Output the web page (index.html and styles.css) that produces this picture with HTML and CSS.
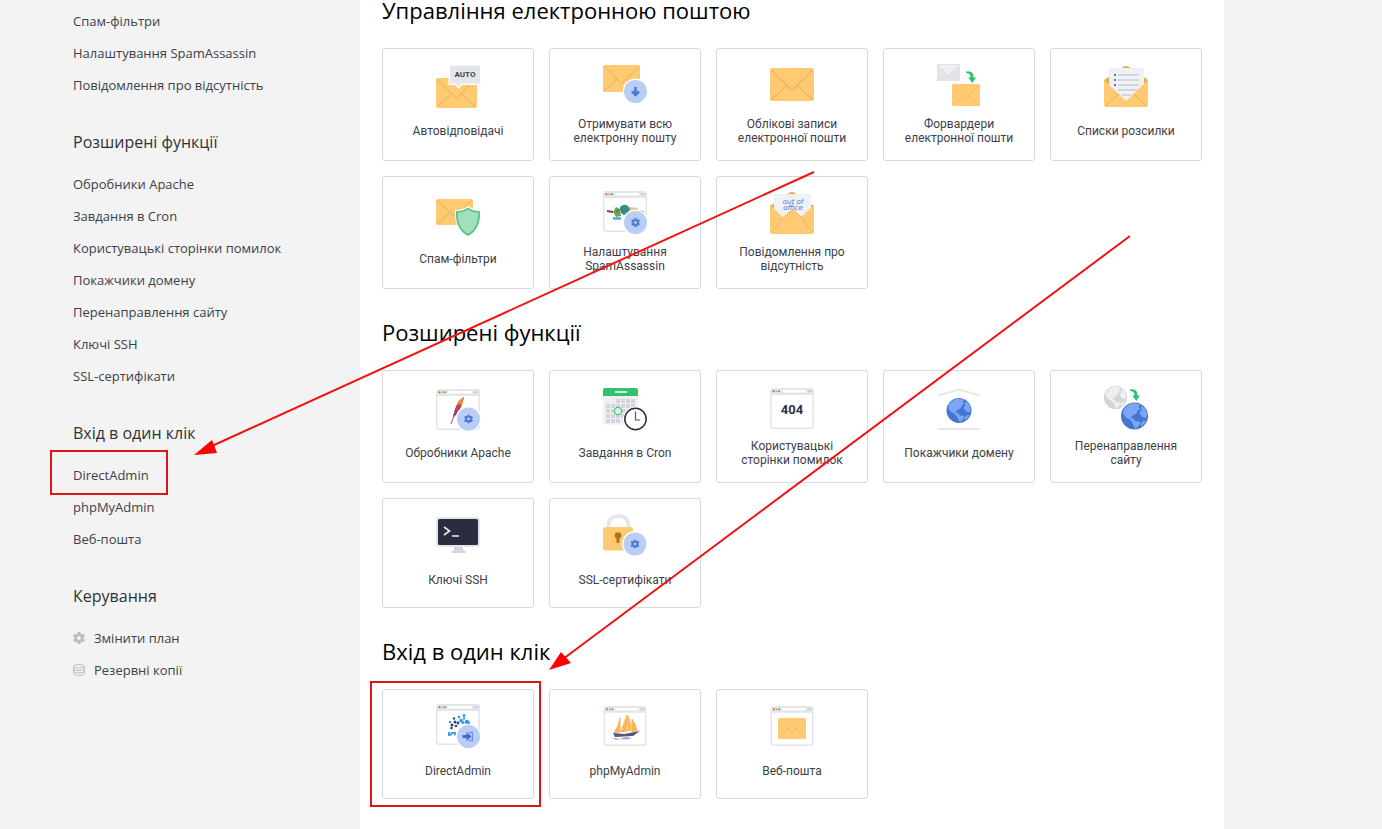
FILE: index.html
```
<!DOCTYPE html>
<html lang="uk">
<head>
    <meta charset="UTF-8">
    <meta name="viewport" content="width=device-width, initial-scale=1.0">
    <title>Панель керування хостингом</title>
    <link rel="stylesheet" href="styles.css">
</head>
<body>
    <!-- Shared icon parts -->
    <svg class="sprite" aria-hidden="true">
        <symbol id="envelope" viewBox="0 0 44 33" preserveAspectRatio="none">
            <rect width="44" height="33" rx="2.5" fill="#ffca72"/>
            <path d="M1 32 17 17M43 32 27 17M1 1.5 20 20.5q2 1.8 4 0L43 1.5" fill="none" stroke="#e9b765" stroke-width="1.2"/>
        </symbol>
        <symbol id="envelope-gray" viewBox="0 0 44 33" preserveAspectRatio="none">
            <rect width="44" height="33" rx="2" fill="#e2e4e8"/>
            <path d="M1 32 17 17M43 32 27 17" stroke="#d3d6db" stroke-width="1.2"/>
            <path d="M1 1 20 20.5q2 1.8 4 0L43 1z" fill="#eff0f3" stroke="#d6d8dd"/>
        </symbol>
        <symbol id="window" viewBox="0 0 44 41">
            <rect width="44" height="41" rx="3" fill="#e4e5e9"/>
            <path d="M1.5 7h41v30.500q0 2-2 2h-37q-2 0-2-2z" fill="#fff"/>
            <rect x="12" y="2" width="24" height="2.500" rx="1" fill="#fff"/>
            <circle cx="3.500" cy="3.300" r="1" fill="#d9534f"/>
            <circle cx="6.300" cy="3.300" r="1" fill="#e8a13a"/>
            <circle cx="9" cy="3.300" r="1" fill="#35b566"/>
            <path d="M38 3.300h1.500M40.500 3.300H42" stroke="#bfc2c9" stroke-width="1.500"/>
        </symbol>
        <symbol id="gear" viewBox="0 0 12 12">
            <circle cx="6" cy="6" r="3.200" fill="none" stroke="currentColor" stroke-width="2.600"/>
            <path d="M6 0v2M6 10v2M.8 3l1.700 1M9.500 8l1.700 1M.8 9l1.700-1M9.500 4l1.700-1" stroke="currentColor" stroke-width="3"/>
        </symbol>
        <symbol id="badge" viewBox="0 0 26 26">
            <circle cx="13" cy="13" r="13" fill="#fff"/>
            <circle cx="13" cy="13" r="11.500" fill="#bacdf4"/>
        </symbol>
        <symbol id="turn" viewBox="0 0 10 12">
            <path d="M0 0.500q7.500-1.500 7.500 6h2.500l-3.700 5.500L2.200 6.500h2.300q.3-4.500-4.500-4.500z" fill="#2fbe6f"/>
        </symbol>
        <symbol id="land" viewBox="0 0 28 28">
            <path d="M3 7q4-6 11-6.500l3 1 3 0-2 3 2 2-3 2-1 3-4 2-2 3 3 0 2 3 4 0 1 2-2 3-3 3-2-4-3-5-5-3-3-4z"/>
            <path d="M21 3q5 3 6 9l-1 4-4-1-3-4 2-3zM23 19l3 0q-2 4-5 6l-1-3z"/>
        </symbol>
    </svg>

    <div class="page">
        <nav class="sidebar">
            <ul>
                <li><a href="#">Спам-фільтри</a></li>
                <li><a href="#">Налаштування SpamAssassin</a></li>
                <li><a href="#">Повідомлення про відсутність</a></li>
            </ul>

            <h3>Розширені функції</h3>
            <ul>
                <li><a href="#">Обробники Apache</a></li>
                <li><a href="#">Завдання в Cron</a></li>
                <li><a href="#">Користувацькі сторінки помилок</a></li>
                <li><a href="#">Покажчики домену</a></li>
                <li><a href="#">Перенаправлення сайту</a></li>
                <li><a href="#">Ключі SSH</a></li>
                <li><a href="#">SSL-сертифікати</a></li>
            </ul>

            <h3>Вхід в один клік</h3>
            <ul>
                <li><a href="#">DirectAdmin</a></li>
                <li><a href="#">phpMyAdmin</a></li>
                <li><a href="#">Веб-пошта</a></li>
            </ul>

            <h3>Керування</h3>
            <ul>
                <li><a href="#"><svg class="nav-icon" viewBox="0 0 12 12" aria-hidden="true"><use href="#gear"/></svg>Змінити план</a></li>
                <li><a href="#"><svg class="nav-icon" viewBox="0 0 12 12" aria-hidden="true">
                    <path d="M.7 2.500v7.300q1 1.700 5.300 1.700t5.300-1.700V2.500M.7 5q1 1.500 5.300 1.500T11.300 5M.7 7.500Q1.700 9 6 9t5.300-1.500" fill="none" stroke="currentColor"/>
                    <ellipse cx="6" cy="2.300" rx="5.300" ry="1.700" fill="none" stroke="currentColor"/>
                </svg>Резервні копії</a></li>
            </ul>
        </nav>

        <main class="content">
            <section>
                <h2>Управління електронною поштою</h2>
                <div class="cards">
                    <a class="card" href="#">
                        <svg class="icon" viewBox="0 0 44 44" aria-hidden="true">
                            <use href="#envelope" y="14" width="41" height="30"/>
                            <path d="M12.500 0H44v21H26l-3.500 4-3.500-4h-6.500z" fill="#fff"/>
                            <path d="M14 1.500h30v18H25.500L22.500 23l-3-3.500H14z" fill="#e5e6ec"/>
                            <text class="auto" x="29" y="12.500">AUTO</text>
                        </svg>
                        <span>Автовідповідачі</span>
                    </a>
                    <a class="card" href="#">
                        <svg class="icon" viewBox="0 0 44 44" aria-hidden="true">
                            <use href="#envelope" y="1" width="37" height="27"/>
                            <use href="#badge" x="19.500" y="14.500" width="26" height="26"/>
                            <path d="M32.500 23v7M29 27.500l3.500 3.500 3.500-3.500" fill="none" stroke="#4678d4" stroke-width="2.600"/>
                        </svg>
                        <span>Отримувати всю електронну пошту</span>
                    </a>
                    <a class="card" href="#">
                        <svg class="icon" viewBox="0 0 44 44" aria-hidden="true">
                            <use href="#envelope" y="4" width="44" height="33"/>
                        </svg>
                        <span>Облікові записи електронної пошти</span>
                    </a>
                    <a class="card" href="#">
                        <svg class="icon" viewBox="0 0 44 44" aria-hidden="true">
                            <use href="#envelope-gray" width="23" height="17"/>
                            <use href="#envelope" x="15" y="20" width="28" height="22"/>
                            <use href="#turn" x="29" y="7" width="10" height="12"/>
                        </svg>
                        <span>Форвардери електронної пошти</span>
                    </a>
                    <a class="card" href="#">
                        <svg class="icon" viewBox="0 0 44 44" aria-hidden="true">
                            <path d="M0 16 19 3q3-2 6 0l19 13v8H0z" fill="#e5ac50"/>
                            <path d="M5 4h35v18L22 38 5 22z" fill="#eff1f5"/>
                            <path d="M14 11h21M14 16h21M14 21h21M14 26h19M18 31h9" stroke="#c9cdd7" stroke-width="1.300"/>
                            <path d="M10 11h2M10 16h2M10 21h2" stroke="#4678d4" stroke-width="2"/>
                            <path d="M0 16l20 19q2 2 4 0l20-19v24.500q0 2.500-2.500 2.500h-39Q0 43 0 40.500z" fill="#ffca72"/>
                            <path d="M1 42 15 30M43 42 29 30" stroke="#e3af5d"/>
                        </svg>
                        <span>Списки розсилки</span>
                    </a>

                    <a class="card" href="#">
                        <svg class="icon" viewBox="0 0 44 44" aria-hidden="true">
                            <use href="#envelope" y="7" width="37" height="26"/>
                            <path d="M32 14q6 4 13 4 1 19-13 27-14-8-13-27 7 0 13-4z" fill="#fff"/>
                            <path d="M32 16.500q5 3.500 11 3.500 1 16-11 23-12-7-11-23 6 0 11-3.500z" fill="#a3dfba" stroke="#5ec78f" stroke-width="2"/>
                        </svg>
                        <span>Спам-фільтри</span>
                    </a>
                    <a class="card" href="#">
                        <svg class="icon" viewBox="0 0 44 44" aria-hidden="true">
                            <use href="#window" y="-1" width="44" height="41"/>
                            <path d="M4 18l6 1v2l-6-1z" fill="#8a3565"/>
                            <path d="M26 15l9 1v3l-9 1z" fill="#f0c28a"/>
                            <path d="M36 18.500l5 1.500" stroke="#766da8"/>
                            <path d="M10 20l3-5 4 2 1 7-5 1z" fill="#6aa457"/>
                            <path d="M17 15q4-4 8-1l2 3-3 7-6-3z" fill="#378f83"/>
                            <path d="M13 20l5-3 3 6" fill="none" stroke="#39745a"/>
                            <path d="M10 26.500h8" stroke="#56a7d5" stroke-width="2.500"/>
                            <use href="#badge" x="19.500" y="17.500" width="26" height="26"/>
                            <svg x="28" y="26" width="9" height="9" color="#4678d4"><use href="#gear"/></svg>
                        </svg>
                        <span>Налаштування SpamAssassin</span>
                    </a>
                    <a class="card" href="#">
                        <svg class="icon" viewBox="0 0 44 44" aria-hidden="true">
                            <path d="M0 14 19 1q3-2 6 0l19 13v8H0z" fill="#e5ac50"/>
                            <path d="M4 2h37v20L30 30H14L4 22z" fill="#eff1f5"/>
                            <path d="M0 13l13 12 7.500-6q2-1.500 4 0L31 25l13-12v26.500q0 2.500-2.500 2.500h-39Q0 42 0 39.500z" fill="#ffca72"/>
                            <path d="M1 41 13 26l8-7q2-1.200 3.500 0L31 25l12 16" fill="none" stroke="#e9b765"/>
                            <text class="note" x="23" y="11.500">out of</text>
                            <text class="note" x="23" y="18">office</text>
                        </svg>
                        <span>Повідомлення про відсутність</span>
                    </a>
                </div>
            </section>

            <section>
                <h2>Розширені функції</h2>
                <div class="cards">
                    <a class="card" href="#">
                        <svg class="icon" viewBox="0 0 44 44" aria-hidden="true">
                            <use href="#window" y="3" width="44" height="41"/>
                            <path d="M28 11q-6 3-9 12-2 6-2 8 6-4 8-10t3-10z" fill="#d0394a"/>
                            <path d="M28 11q-5 2.500-7 8l5-1q2-4 2-7z" fill="#ef8a36"/>
                            <path d="M17 31l3-8 2 3-4 5z" fill="#8d2d73"/>
                            <path d="M23 19q-5 9-8 19" fill="none" stroke="#a0519a"/>
                            <use href="#badge" x="19.500" y="20" width="26" height="26"/>
                            <svg x="28" y="28.500" width="9" height="9" color="#4678d4"><use href="#gear"/></svg>
                        </svg>
                        <span>Обробники Apache</span>
                    </a>
                    <a class="card" href="#">
                        <svg class="icon" viewBox="0 0 44 44" aria-hidden="true">
                            <path d="M0 10h35v28.500H2q-2 0-2-2z" fill="#eff0f3"/>
                            <path d="M0 10V4q0-2 2-2h31q2 0 2 2v6z" fill="#31c16f"/>
                            <path d="M12 6h12" stroke="#fff" stroke-width="1.600"/>
                            <path d="M13 15h20M3 20h30M3 25h30M3 30h30M3 35h14" stroke="#d3d5da" stroke-width="3.800" stroke-dasharray="4 1"/>
                            <circle cx="15" cy="25" r="3.700" fill="#d8f1e3" stroke="#44c37c" stroke-width="1.200"/>
                            <circle cx="32.500" cy="33" r="12.500" fill="#fff"/>
                            <circle cx="32.500" cy="33" r="10.700" fill="#fff" stroke="#2a2d40" stroke-width="1.500"/>
                            <path d="M32.500 25.500V34H37" fill="none" stroke="#555966" stroke-width="1.200"/>
                        </svg>
                        <span>Завдання в Cron</span>
                    </a>
                    <a class="card" href="#">
                        <svg class="icon" viewBox="0 0 44 44" aria-hidden="true">
                            <use href="#window" y="2" width="44" height="41"/>
                            <text class="code" x="22" y="28">404</text>
                        </svg>
                        <span>Користувацькі сторінки помилок</span>
                    </a>
                    <a class="card" href="#">
                        <svg class="icon" viewBox="0 0 44 44" aria-hidden="true">
                            <path d="M1 9.500 22 3.500l21 6M1 43h42" fill="none" stroke="#e6e7ea" stroke-width="2"/>
                            <circle cx="22" cy="24.500" r="12.500" fill="#4475d1"/>
                            <use href="#land" x="9.500" y="12" width="25" height="25" fill="#7ba6f5"/>
                        </svg>
                        <span>Покажчики домену</span>
                    </a>
                    <a class="card" href="#">
                        <svg class="icon" viewBox="0 0 44 44" aria-hidden="true">
                            <circle cx="11.500" cy="11.500" r="11.500" fill="#d3d5d8"/>
                            <use href="#land" width="23" height="23" fill="#eeeff1"/>
                            <circle cx="30.500" cy="30" r="15" fill="#fff"/>
                            <circle cx="30.500" cy="30" r="13.500" fill="#4475d1"/>
                            <use href="#land" x="17" y="16.500" width="27" height="27" fill="#7ba6f5"/>
                            <use href="#turn" x="26" y="3" width="10" height="12"/>
                        </svg>
                        <span>Перенаправлення сайту</span>
                    </a>

                    <a class="card" href="#">
                        <svg class="icon" viewBox="0 0 44 44" aria-hidden="true">
                            <rect y="3" width="44" height="30" rx="2.500" fill="#e2e5ed"/>
                            <rect x="2" y="5" width="40" height="26" rx="1.500" fill="#292d3e"/>
                            <path d="M8 13l5.500 4L8 21M16 22h7" fill="none" stroke="#e8eaf0" stroke-width="1.700"/>
                            <path d="M18 33h9v3l3 1.500V39H15.500v-1.500L18 36z" fill="#d4d6da"/>
                        </svg>
                        <span>Ключі SSH</span>
                    </a>
                    <a class="card" href="#">
                        <svg class="icon" viewBox="0 0 44 44" aria-hidden="true">
                            <path d="M5.500 14v-2q0-10 10-10t10 10v2" fill="none" stroke="#e3e5ea" stroke-width="3.500"/>
                            <rect y="13" width="30" height="23.500" rx="2.500" fill="#ffca72"/>
                            <circle cx="15" cy="21.500" r="3.300" fill="#ae741a"/>
                            <path d="M13.500 22h3v7h-3z" fill="#ae741a"/>
                            <use href="#badge" x="19" y="17" width="26" height="26"/>
                            <svg x="27.500" y="25.500" width="9" height="9" color="#4678d4"><use href="#gear"/></svg>
                        </svg>
                        <span>SSL-сертифікати</span>
                    </a>
                </div>
            </section>

            <section>
                <h2>Вхід в один клік</h2>
                <div class="cards">
                    <a class="card" href="#">
                        <svg class="icon" viewBox="0 0 44 44" aria-hidden="true">
                            <use href="#window" y="-1" width="44" height="41"/>
                            <g fill="#27477d">
                                <circle cx="14" cy="17" r="1"/><circle cx="18" cy="13.500" r="1.200"/><circle cx="19" cy="17" r="1.500"/>
                                <circle cx="16" cy="20" r="1.500"/><circle cx="20" cy="21" r="1.300"/><circle cx="15.500" cy="23" r="1.300"/><circle cx="22" cy="18" r="1.400"/>
                            </g>
                            <g fill="#2b9fdc">
                                <circle cx="23" cy="12" r="1.300"/><circle cx="25" cy="15.500" r="1.800"/><circle cx="28" cy="10.500" r="1.500"/>
                                <circle cx="28" cy="13.500" r="1.200"/><circle cx="27" cy="17.500" r="1.500"/><circle cx="31" cy="17" r="2.200"/><circle cx="33" cy="18" r="1.200"/>
                            </g>
                            <path d="M13 27v4M15 28h5M14 29.500h2M18 29.500h2" stroke="#35a6dd" stroke-width="2"/>
                            <use href="#badge" x="19.500" y="18.500" width="26" height="26"/>
                            <path d="M26.500 30h4v-3l5 4.500-5 4.500v-3h-4z" fill="#3f6dca"/>
                            <path d="M33 27.500h3.500v8H33" fill="none" stroke="#6c93e0" stroke-width="1.300"/>
                        </svg>
                        <span>DirectAdmin</span>
                    </a>
                    <a class="card" href="#">
                        <svg class="icon" viewBox="0 0 44 44" aria-hidden="true">
                            <use href="#window" y="1" width="44" height="40"/>
                            <path d="M17 13q-1 8-6 15l6-1zM24 10l-6 17 6-1zM25 11q3 8 3 14l-3 1zM29 14q4 5 5 12l-5 1z" fill="#f9b65a" stroke="#f9b65a"/>
                            <path d="M10 28l11 1 16-3-7 5-18 1z" fill="#54587d"/>
                            <path d="M9 32.500l7 1.500 7-2 6 1-5 1.500-6-.5-5 1z" fill="#98a3d7"/>
                        </svg>
                        <span>phpMyAdmin</span>
                    </a>
                    <a class="card" href="#">
                        <svg class="icon" viewBox="0 0 44 44" aria-hidden="true">
                            <use href="#window" y="1" width="44" height="40"/>
                            <use href="#envelope" x="8" y="13" width="28" height="21"/>
                        </svg>
                        <span>Веб-пошта</span>
                    </a>
                </div>
            </section>

            <p class="footer-title">Резервні копії</p>
        </main>

        <!-- Guide arrows and frames over the page -->
        <svg class="marks" width="1382" height="829" aria-hidden="true">
            <path d="M814 172 212 446M1130 236 563 659" stroke="#f31212" stroke-width="2"/>
            <path d="M194 455l18-15 5 13zM549 670l12-18 10 11z" fill="#fe0000"/>
            <path d="M51 451h116v43H51zM371 682h169v124H371z" fill="none" stroke="#dd1515" stroke-width="2"/>
        </svg>
    </div>
</body>
</html>
```
FILE: styles.css
```
:root {
    --side-color: #f3f3f3;
    --text-color: #3c4149;
    --border-color: #d8d9dc;
}

* {
    box-sizing: border-box;
}

body {
    margin: 0;
    background-color: var(--side-color);
    color: var(--text-color);
    font-family: 'Open Sans', sans-serif;
    font-size: 13px;
}

a {
    color: inherit;
    text-decoration: none;
}

.sprite {
    display: none;
}

.page {
    position: relative;
    display: flex;
    height: 100vh;
    overflow: hidden;
}

/* Sidebar */
.sidebar {
    flex: 0 0 360px;
    padding: 5px 20px 0 73px;
}

.sidebar ul {
    list-style: none;
    margin: 0;
    padding: 0;
}

.sidebar li {
    line-height: 32px;
}

.sidebar li a {
    display: flex;
    align-items: center;
}

.sidebar h3 {
    margin: 29px 0 14px;
    font-size: 16px;
    font-weight: 400;
    line-height: 24px;
    color: #2f3237;
}

.nav-icon {
    width: 12px;
    height: 12px;
    margin-right: 9px;
    color: #b9bdc2;
}

/* Main column */
.content {
    flex: 1;
    max-width: 864px;
    padding: 0 22px;
    background-color: #fff;
}

.content section {
    margin-bottom: 28px;
}

.content section:first-child {
    margin-top: -5px;
}

.content h2 {
    margin: 0 0 23px;
    font-size: 22px;
    font-weight: 400;
    line-height: 30px;
    color: #000;
}

.cards {
    display: grid;
    grid-template-columns: repeat(5, 1fr);
    gap: 15px;
}

.card {
    display: flex;
    flex-direction: column;
    align-items: center;
    min-height: 110px;
    padding: 15px 18px;
    border: 1px solid var(--border-color);
    border-radius: 3px;
    font-family: Roboto, sans-serif;
    font-size: 12px;
    line-height: 14px;
    text-align: center;
}

.card span {
    display: flex;
    flex: 1;
    align-items: center;
    margin-top: 9px;
}

.icon {
    flex: none;
    width: 44px;
    height: 44px;
    overflow: visible;
}

.icon text {
    text-anchor: middle;
}

.auto {
    font: 700 8px Roboto, sans-serif;
    fill: #3b3e52;
}

.note {
    font: italic 7px 'DejaVu Sans', sans-serif;
    fill: #4678d4;
}

.code {
    font: 700 13px Roboto, sans-serif;
    fill: #2d3044;
}

.footer-title {
    margin: 0 15px;
    line-height: 18px;
}

.marks {
    position: absolute;
    top: 0;
    left: 0;
    pointer-events: none;
}
```
